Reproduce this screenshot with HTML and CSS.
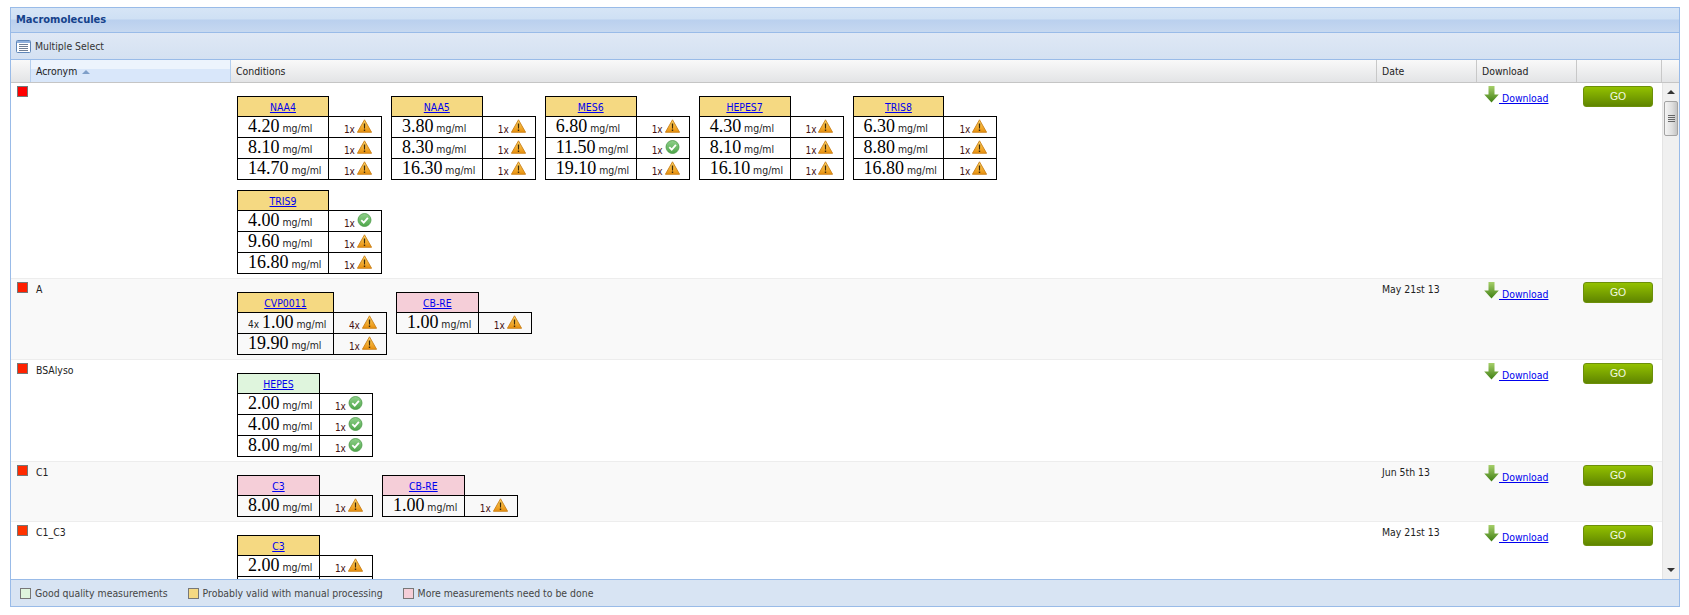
FILE: index.html
```html
<!DOCTYPE html>
<html lang="en">
<head>
<meta charset="utf-8">
<title>Macromolecules</title>
<link rel="stylesheet" href="styles.css">
</head>
<body>
<svg class="defs" width="0" height="0" aria-hidden="true">
  <defs>
    <linearGradient id="warnFill" x1="0" y1="0" x2="0" y2="1"><stop offset="0" stop-color="#fcd566"/><stop offset="1" stop-color="#e98f0c"/></linearGradient>
    <linearGradient id="okFill" x1="0" y1="0" x2="0" y2="1"><stop offset="0" stop-color="#8fd08a"/><stop offset="1" stop-color="#4ea64a"/></linearGradient>
    <linearGradient id="dlFill" x1="0" y1="0" x2="0" y2="1"><stop offset="0" stop-color="#a6cf6a"/><stop offset="1" stop-color="#3f7f12"/></linearGradient>
    <symbol id="warn" viewBox="0 0 15 14"><path d="M7.5 .8 14.600 13.300H.4Z" fill="url(#warnFill)" stroke="#c9801a" stroke-width=".9" stroke-linejoin="round"/><path d="M6.800 4.400h1.400l-.2 5H7ZM6.800 10.400h1.400v1.600H6.800Z" fill="#3c2a0a"/></symbol>
    <symbol id="ok" viewBox="0 0 14 14"><circle cx="7" cy="7" r="6.500" fill="url(#okFill)" stroke="#4d9a49" stroke-width=".8"/><path d="M3.800 7.200 6.200 9.600 10.400 4.800" fill="none" stroke="#fff" stroke-width="1.800"/></symbol>
    <symbol id="dl" viewBox="0 0 15 17"><path d="M4.500 0h6v8.500h4.300L7.500 16.500.2 8.500h4.300Z" fill="url(#dlFill)"/></symbol>
  </defs>
</svg>

<section class="panel">
  <h1 class="title">Macromolecules</h1>
  <div class="toolbar">
    <svg class="tool-icon" width="15" height="13" viewBox="0 0 15 13"><rect x=".5" y=".5" width="14" height="12" rx="1" fill="#fff" stroke="#5f86b8"/><rect x="1" y="1" width="13" height="2" fill="#8fb0dc"/><path d="M3 4.500h9M3 6.500h9M3 8.500h9M3 10.500h9" stroke="#6f7f96"/></svg>
    <span>Multiple Select</span>
  </div>
  <div class="grid-head">
    <div class="hc"></div>
    <div class="hc sorted">Acronym <span class="sort-arrow"></span></div>
    <div class="hc">Conditions</div>
    <div class="hc">Date</div>
    <div class="hc">Download</div>
    <div class="hc"></div>
    <div class="hc last"></div>
  </div>
  <div class="grid-body">
    <div class="rows">

      <div class="row">
        <div class="c-mark"><span class="mark m0"></span></div>
        <div class="c-name"></div>
        <div class="c-cond">
          <table class="m"><tr><th class="warnbg"><a href="#">NAA4</a></th><td class="e"></td></tr>
            <tr><td class="v"><b>4.20</b> mg/ml</td><td class="q">1x <svg class="i"><use href="#warn"/></svg></td></tr>
            <tr><td class="v"><b>8.10</b> mg/ml</td><td class="q">1x <svg class="i"><use href="#warn"/></svg></td></tr>
            <tr><td class="v"><b>14.70</b> mg/ml</td><td class="q">1x <svg class="i"><use href="#warn"/></svg></td></tr></table>
          <table class="m"><tr><th class="warnbg"><a href="#">NAA5</a></th><td class="e"></td></tr>
            <tr><td class="v"><b>3.80</b> mg/ml</td><td class="q">1x <svg class="i"><use href="#warn"/></svg></td></tr>
            <tr><td class="v"><b>8.30</b> mg/ml</td><td class="q">1x <svg class="i"><use href="#warn"/></svg></td></tr>
            <tr><td class="v"><b>16.30</b> mg/ml</td><td class="q">1x <svg class="i"><use href="#warn"/></svg></td></tr></table>
          <table class="m"><tr><th class="warnbg"><a href="#">MES6</a></th><td class="e"></td></tr>
            <tr><td class="v"><b>6.80</b> mg/ml</td><td class="q">1x <svg class="i"><use href="#warn"/></svg></td></tr>
            <tr><td class="v"><b>11.50</b> mg/ml</td><td class="q">1x <svg class="i"><use href="#ok"/></svg></td></tr>
            <tr><td class="v"><b>19.10</b> mg/ml</td><td class="q">1x <svg class="i"><use href="#warn"/></svg></td></tr></table>
          <table class="m"><tr><th class="warnbg"><a href="#">HEPES7</a></th><td class="e"></td></tr>
            <tr><td class="v"><b>4.30</b> mg/ml</td><td class="q">1x <svg class="i"><use href="#warn"/></svg></td></tr>
            <tr><td class="v"><b>8.10</b> mg/ml</td><td class="q">1x <svg class="i"><use href="#warn"/></svg></td></tr>
            <tr><td class="v"><b>16.10</b> mg/ml</td><td class="q">1x <svg class="i"><use href="#warn"/></svg></td></tr></table>
          <table class="m"><tr><th class="warnbg"><a href="#">TRIS8</a></th><td class="e"></td></tr>
            <tr><td class="v"><b>6.30</b> mg/ml</td><td class="q">1x <svg class="i"><use href="#warn"/></svg></td></tr>
            <tr><td class="v"><b>8.80</b> mg/ml</td><td class="q">1x <svg class="i"><use href="#warn"/></svg></td></tr>
            <tr><td class="v"><b>16.80</b> mg/ml</td><td class="q">1x <svg class="i"><use href="#warn"/></svg></td></tr></table>
          <table class="m"><tr><th class="warnbg"><a href="#">TRIS9</a></th><td class="e"></td></tr>
            <tr><td class="v"><b>4.00</b> mg/ml</td><td class="q">1x <svg class="i"><use href="#ok"/></svg></td></tr>
            <tr><td class="v"><b>9.60</b> mg/ml</td><td class="q">1x <svg class="i"><use href="#warn"/></svg></td></tr>
            <tr><td class="v"><b>16.80</b> mg/ml</td><td class="q">1x <svg class="i"><use href="#warn"/></svg></td></tr></table>
        </div>
        <div class="c-date"></div>
        <div class="c-dl"><svg class="dl"><use href="#dl"/></svg><a href="#">&nbsp;Download</a></div>
        <div class="c-go"><button class="go">GO</button></div>
      </div>

      <div class="row alt">
        <div class="c-mark"><span class="mark m1"></span></div>
        <div class="c-name">A</div>
        <div class="c-cond">
          <table class="m"><tr><th class="warnbg"><a href="#">CVP0011</a></th><td class="e"></td></tr>
            <tr><td class="v"><small>4x</small> <b>1.00</b> mg/ml</td><td class="q">4x <svg class="i"><use href="#warn"/></svg></td></tr>
            <tr><td class="v"><b>19.90</b> mg/ml</td><td class="q">1x <svg class="i"><use href="#warn"/></svg></td></tr></table>
          <table class="m"><tr><th class="badbg"><a href="#">CB-RE</a></th><td class="e"></td></tr>
            <tr><td class="v"><b>1.00</b> mg/ml</td><td class="q">1x <svg class="i"><use href="#warn"/></svg></td></tr></table>
        </div>
        <div class="c-date">May 21st 13</div>
        <div class="c-dl"><svg class="dl"><use href="#dl"/></svg><a href="#">&nbsp;Download</a></div>
        <div class="c-go"><button class="go">GO</button></div>
      </div>

      <div class="row">
        <div class="c-mark"><span class="mark m2"></span></div>
        <div class="c-name">BSAlyso</div>
        <div class="c-cond">
          <table class="m"><tr><th class="goodbg"><a href="#">HEPES</a></th><td class="e"></td></tr>
            <tr><td class="v"><b>2.00</b> mg/ml</td><td class="q">1x <svg class="i"><use href="#ok"/></svg></td></tr>
            <tr><td class="v"><b>4.00</b> mg/ml</td><td class="q">1x <svg class="i"><use href="#ok"/></svg></td></tr>
            <tr><td class="v"><b>8.00</b> mg/ml</td><td class="q">1x <svg class="i"><use href="#ok"/></svg></td></tr></table>
        </div>
        <div class="c-date"></div>
        <div class="c-dl"><svg class="dl"><use href="#dl"/></svg><a href="#">&nbsp;Download</a></div>
        <div class="c-go"><button class="go">GO</button></div>
      </div>

      <div class="row alt">
        <div class="c-mark"><span class="mark m3"></span></div>
        <div class="c-name">C1</div>
        <div class="c-cond">
          <table class="m"><tr><th class="badbg"><a href="#">C3</a></th><td class="e"></td></tr>
            <tr><td class="v"><b>8.00</b> mg/ml</td><td class="q">1x <svg class="i"><use href="#warn"/></svg></td></tr></table>
          <table class="m"><tr><th class="badbg"><a href="#">CB-RE</a></th><td class="e"></td></tr>
            <tr><td class="v"><b>1.00</b> mg/ml</td><td class="q">1x <svg class="i"><use href="#warn"/></svg></td></tr></table>
        </div>
        <div class="c-date">Jun 5th 13</div>
        <div class="c-dl"><svg class="dl"><use href="#dl"/></svg><a href="#">&nbsp;Download</a></div>
        <div class="c-go"><button class="go">GO</button></div>
      </div>

      <div class="row">
        <div class="c-mark"><span class="mark m4"></span></div>
        <div class="c-name">C1_C3</div>
        <div class="c-cond">
          <table class="m"><tr><th class="warnbg"><a href="#">C3</a></th><td class="e"></td></tr>
            <tr><td class="v"><b>2.00</b> mg/ml</td><td class="q">1x <svg class="i"><use href="#warn"/></svg></td></tr>
            <tr><td class="v"></td><td class="q"></td></tr></table>
        </div>
        <div class="c-date">May 21st 13</div>
        <div class="c-dl"><svg class="dl"><use href="#dl"/></svg><a href="#">&nbsp;Download</a></div>
        <div class="c-go"><button class="go">GO</button></div>
      </div>

    </div>
    <div class="scrollbar">
      <span class="sb-up"></span>
      <span class="sb-thumb"><span class="sb-grip"></span></span>
      <span class="sb-down"></span>
    </div>
  </div>
  <footer class="legend">
    <span class="lg"><i class="sw goodbg"></i>Good quality measurements</span>
    <span class="lg"><i class="sw warnbg"></i>Probably valid with manual processing</span>
    <span class="lg"><i class="sw badbg"></i>More measurements need to be done</span>
  </footer>
</section>
</body>
</html>
```
FILE: styles.css
```css
html, body { margin: 0; padding: 0; background: #fff; }
body {
  padding: 7px 10px 0;
  font: 10.4px/13px "DejaVu Sans Condensed", "Liberation Sans", Arial, sans-serif;
  font-stretch: condensed;
  color: #222;
  overflow: hidden;
}
.defs { position: absolute; }

.panel {
  width: 1670px;
  box-sizing: border-box;
  border: 1px solid #99bbe8;
  display: flex;
  flex-direction: column;
}

.title {
  margin: 0;
  height: 24px;
  box-sizing: border-box;
  padding-left: 5px;
  font: bold 11px/24px "DejaVu Sans Condensed", "Liberation Sans", Arial, sans-serif;
  font-stretch: condensed;
  color: #15428b;
  background: linear-gradient(#d6e5f6 0, #cfe0f4 11px, #bad0ee 12px, #c6d8f0 24px);
}
.toolbar {
  height: 27px;
  box-sizing: border-box;
  border-top: 1px solid #99bbe8;
  display: flex;
  align-items: center;
  gap: 4px;
  padding-left: 5px;
  background: linear-gradient(#dfe8f5, #d4e1f2);
  color: #333;
}

.grid-head {
  display: grid;
  grid-template-columns: 20px 200px 1146px 100px 100px 85px 17px;
  height: 24px;
  box-sizing: border-box;
  border-top: 1px solid #99bbe8;
  border-bottom: 1px solid #c5c5c5;
  background: linear-gradient(#f9f9f9, #e3e4e6);
}
.hc {
  border-right: 1px solid #c8c8c8;
  padding-left: 5px;
  line-height: 22px;
  color: #222;
}
.hc.last { border-right: 0; }
.hc.sorted {
  background: linear-gradient(#edf4fd 0, #edf4fd 9px, #d9e7fa 9px, #d9e7fa 100%);
  border-right-color: #b5cfee;
}
.hc:first-child { border-right-color: #b5cfee; }
.sort-arrow {
  display: inline-block;
  margin-left: 2px;
  vertical-align: 1px;
  border-left: 4px solid transparent;
  border-right: 4px solid transparent;
  border-bottom: 4px solid #7f9fc9;
}

.grid-body {
  height: 496px;
  display: flex;
  overflow: hidden;
}
.rows { width: 1652px; overflow: hidden; }
.row {
  display: grid;
  grid-template-columns: 20px 200px 1146px 100px 100px 86px;
  border-bottom: 1px solid #ededed;
  background: #fff;
  padding-bottom: 4px;
}
.row.alt { background: #f9f9f9; }

.c-mark { padding: 3px 0 0 6px; }
.mark {
  display: block;
  width: 9px;
  height: 9px;
  border: 1px solid #777;
}
.m0 { background: #ff0000; }
.m1 { background: #ff1e00; }
.m2 { background: #ff2200; }
.m3 { background: #ff2a00; }
.m4 { background: #ff3300; }

.c-name { padding: 4px 0 0 5px; }
.c-date { padding: 4px 0 0 5px; }
.c-cond {
  padding: 13px 6px 0;
  display: grid;
  grid-template-columns: repeat(5, max-content);
  gap: 10px 9px;
  align-items: start;
  justify-content: start;
}
.c-dl {
  padding: 3px 0 0 7px;
  display: flex;
  align-items: flex-start;
}
.c-dl a { margin-top: 6px; }
.dl { width: 15px; height: 17px; }
.c-go { padding: 3px 0 0 6px; }
.go {
  display: block;
  width: 70px;
  height: 21px;
  padding: 0;
  border: 1px solid #6c8f0a;
  border-radius: 3px;
  background: linear-gradient(#93c100, #5f8500);
  color: #f4fbe4;
  font: 10.4px/16px "Liberation Sans", Arial, sans-serif;
}

a { color: #0000ee; text-decoration: underline; }

.m { border-collapse: collapse; }
.m th, .m td.v, .m td.q { border: 1px solid #000; padding: 0; }
.m th {
  height: 20px;
  box-sizing: border-box;
  font-weight: normal;
  text-align: center;
  line-height: 14px;
  padding: 1px 0 0;
}
.m td.e { padding: 0; border: 0; }
.m td.v {
  height: 21px;
  box-sizing: border-box;
  padding: 0 6.5px 1px 10px;
  white-space: nowrap;
  line-height: 16px;
  color: #222;
}
.m td.v b {
  font: normal 18px/16px "Liberation Serif", "Times New Roman", serif;
  color: #000;
}
.m td.v small { font-size: 10px; line-height: 10px; }
.m td.q {
  height: 21px;
  box-sizing: border-box;
  width: 53px;
  padding: 1px 0 0 15px;
  white-space: nowrap;
  font-size: 10px;
  word-spacing: -1px;
  line-height: 13px;
  color: #411;
}
.i {
  width: 15px;
  height: 14px;
  vertical-align: 0;
}

.warnbg { background: #f5d982; }
.badbg { background: #f5ced8; }
.goodbg { background: #dff5dd; }

.scrollbar {
  width: 16px;
  background: #f0f0f0;
  border-left: 1px solid #e4e4e4;
  display: flex;
  flex-direction: column;
  align-items: center;
}
.sb-up {
  margin-top: 7px;
  border-left: 4px solid transparent;
  border-right: 4px solid transparent;
  border-bottom: 4px solid #333;
}
.sb-thumb {
  margin-top: 7px;
  width: 12px;
  height: 33px;
  border: 1px solid #a3a3a3;
  border-radius: 2px;
  background: linear-gradient(90deg, #f4f4f4, #dedede 60%, #c4c4c4);
  display: flex;
  align-items: center;
  justify-content: center;
}
.sb-grip {
  width: 7px;
  height: 7px;
  background: repeating-linear-gradient(#666 0 1px, transparent 1px 2px);
}
.sb-down {
  margin-top: auto;
  margin-bottom: 7px;
  border-left: 4px solid transparent;
  border-right: 4px solid transparent;
  border-top: 4px solid #333;
}

.legend {
  height: 27px;
  box-sizing: border-box;
  border-top: 1px solid #99bbe8;
  background: #d8e4f3;
  display: flex;
  align-items: center;
  padding-left: 9px;
  gap: 20px;
  color: #444;
}
.lg { display: flex; align-items: center; gap: 4px; }
.sw {
  width: 9px;
  height: 9px;
  border: 1px solid #777;
}
```
